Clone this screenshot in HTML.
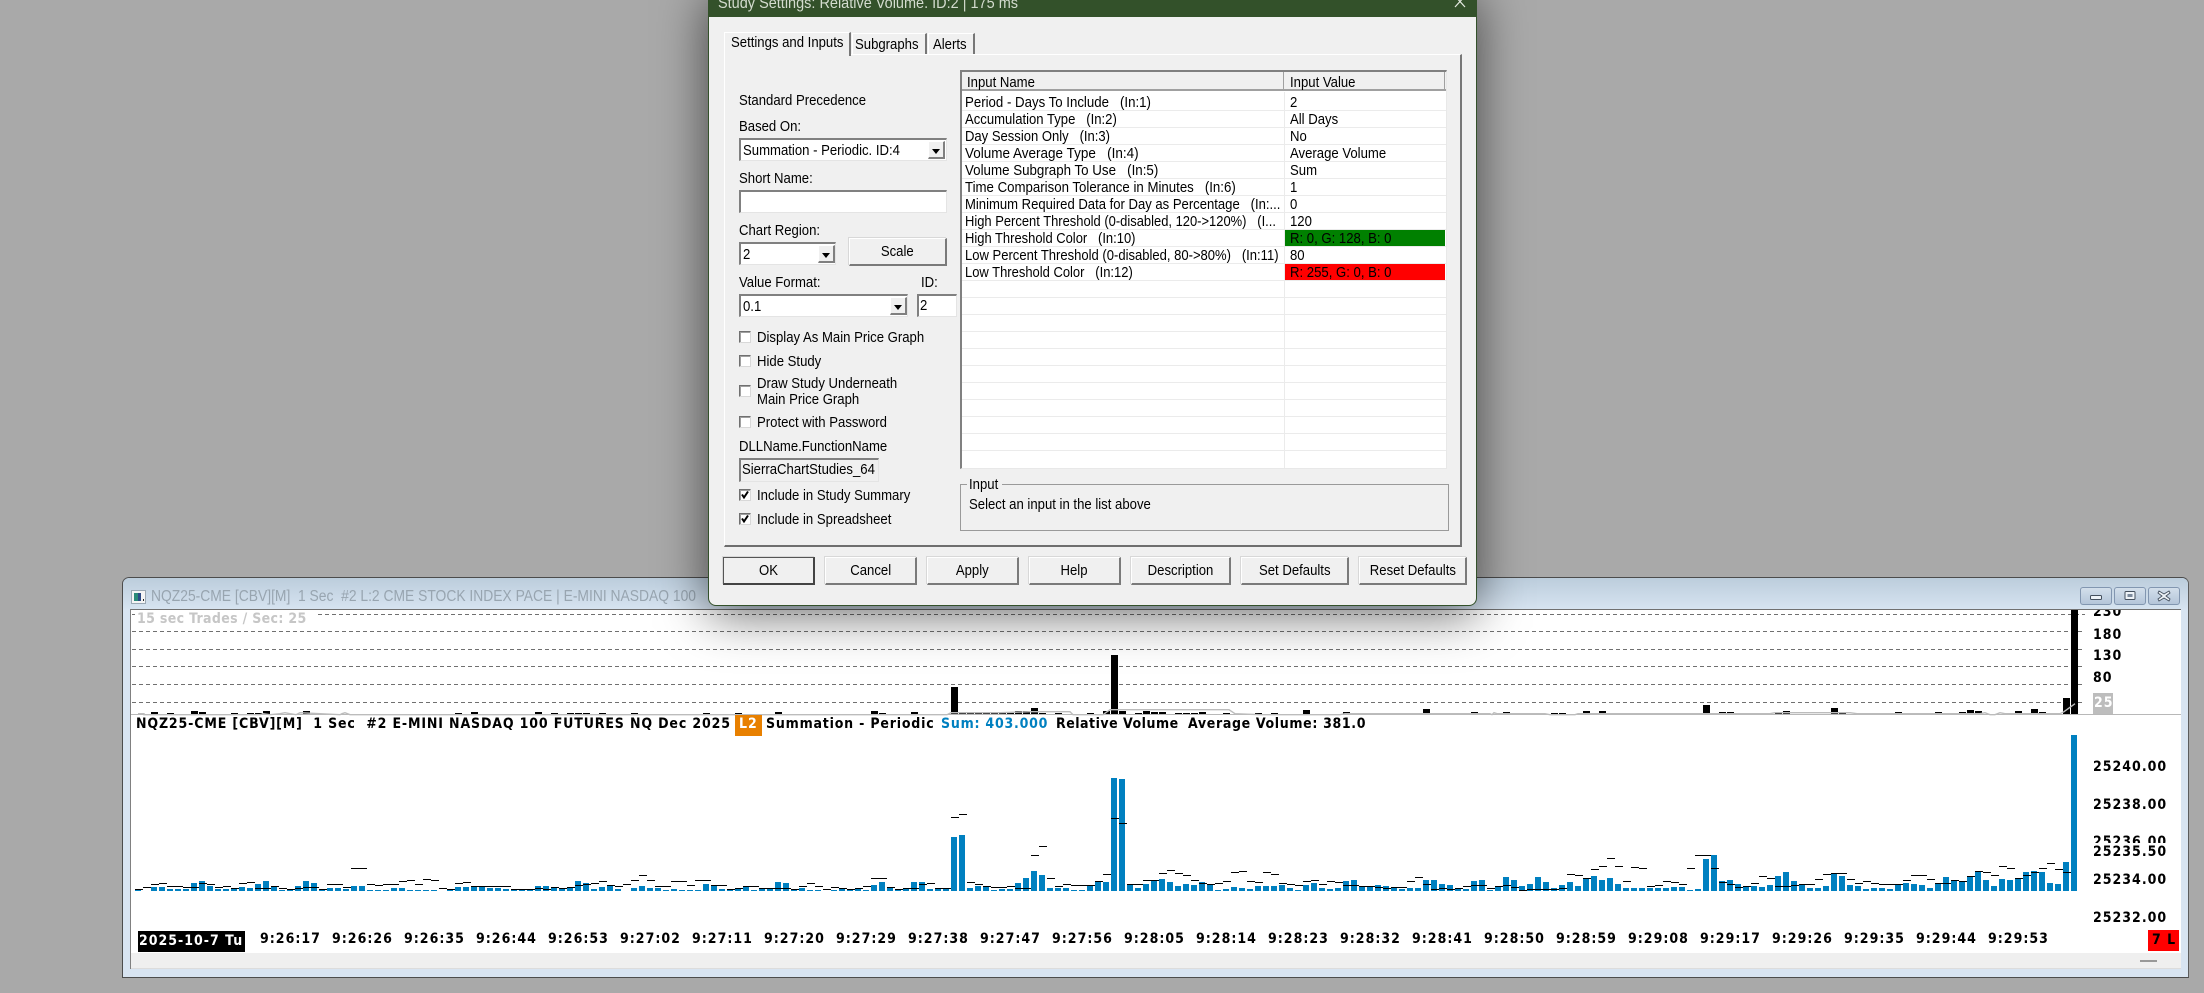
<!DOCTYPE html>
<html><head><meta charset="utf-8"><style>
html,body{margin:0;padding:0;width:2204px;height:993px;overflow:hidden;background:#a9a9a9}
div{box-sizing:border-box}
.a{position:absolute}
.t{position:absolute;white-space:pre;height:20px;margin-top:1px;font:14.6px/20px "Liberation Sans",sans-serif;color:#000;transform:scaleX(.9);transform-origin:0 50%}
.c{position:absolute;white-space:pre;height:20px;font-family:"DejaVu Sans",sans-serif;font-weight:700;font-stretch:condensed;font-size:14px;line-height:20px;letter-spacing:1px;color:#000}
.sk{position:absolute;background:#fff;border-top:2px solid #808080;border-left:2px solid #808080;border-right:1px solid #e4e4e4;border-bottom:1px solid #e4e4e4}
.ar{position:absolute;background:#f0f0f0;border-right:2px solid #808080;border-bottom:2px solid #808080;border-top:1px solid #fff;border-left:1px solid #fff}
.ar:after{content:"";position:absolute;left:3px;top:7px;border-left:4px solid transparent;border-right:4px solid transparent;border-top:5px solid #000}
.b{position:absolute;background:#f0f0f0;border:1px solid #fff;border-right:2px solid #7a7a7a;border-bottom:2px solid #7a7a7a;text-align:center;font:14.6px/26px "Liberation Sans",sans-serif;color:#000;box-shadow:-1px -1px 0 #d8d8d8}
.b span{display:inline-block;transform:scaleX(.9)}
.k{position:absolute;width:12px;height:12px;background:#fff;border-top:1px solid #707070;border-left:1px solid #707070;border-right:1px solid #d8d8d8;border-bottom:1px solid #d8d8d8;box-shadow:inset 1px 1px 0 #a0a0a0}
.wb{position:absolute;top:587px;width:32px;height:18px;border:1px solid #8296b0;border-radius:3px;background:linear-gradient(#d3dfeb,#b4c5d9)}
</style></head><body>

<!-- chart window -->
<div class="a" style="left:122px;top:577px;width:2067px;height:401px;background:#d8e4f1;border:1px solid #4c4c4c;border-right:1px solid #5c5c5c;border-radius:7px 7px 0 0"></div>
<div class="a" style="left:123px;top:578px;width:2065px;height:31px;background:linear-gradient(#bccddc,#d6e3f0);border-radius:6px 6px 0 0"></div>
<div class="a" style="left:130px;top:609px;width:2051px;height:360px;background:#fff;border-top:1px solid #707070;border-left:1px solid #808080"></div>
<div class="a" style="left:131px;top:953px;width:2050px;height:16px;background:#efefef;border-bottom:1px solid #dcdcdc"></div>
<div class="a" style="left:2140px;top:960px;width:17px;height:2px;background:#999"></div>

<svg class="a" style="left:131px;top:590px" width="15" height="14"><rect x=".5" y=".5" width="14" height="13" fill="#f4f4f4" stroke="#9aa8b4"/><rect x="3" y="3" width="4" height="8" fill="#2a8a78"/><rect x="7" y="3" width="3" height="8" fill="#2c4a84"/><rect x="12" y="9" width="1" height="2" fill="#222"/></svg>
<div class="t" style="left:151px;top:587px;margin-top:0;font-size:15.4px;color:#98a5b0">NQZ25-CME [CBV][M]  1 Sec  #2 L:2 CME STOCK INDEX PACE | E-MINI NASDAQ 100</div>

<div class="wb" style="left:2080px"><svg width="30" height="16"><rect x="9.5" y="7.5" width="11" height="4" rx="1" fill="#eef3f8" stroke="#44505e"/></svg></div>
<div class="wb" style="left:2114px"><svg width="30" height="16"><rect x="10" y="3.5" width="10" height="8" rx="1" fill="#eef3f8" stroke="#44505e"/><rect x="12.5" y="6" width="5" height="3" fill="#7b8a9c"/></svg></div>
<div class="wb" style="left:2148px"><svg width="30" height="16"><path d="M10 3l5 3 5-3 1 2-4 3 4 3-1 2-5-3-5 3-1-2 4-3-4-3z" fill="#eef3f8" stroke="#44505e" stroke-width=".9"/></svg></div>

<svg class="a" style="left:0;top:0" width="2204" height="993">
<g stroke="#707070" stroke-width="1" stroke-dasharray="4 3" shape-rendering="crispEdges">
<path d="M318 614.5H2085M132 631.5H2085M132 649.5H2085M132 666.5H2085M132 684.5H2085M132 702.5H2085"/>
</g>
<path d="M132 614.5h3" stroke="#707070"/>
<!-- black bars -->
<path fill="none" stroke="#000" stroke-width="7" shape-rendering="crispEdges" d="M154.500 714v-2M170.500 714v-1M194.500 714v-3M202.500 714v-2M234.500 714v-1M250.500 714v-1M258.500 714v-1M266.500 714v-3M306.500 714v-3M458.500 714v-1M474.500 714v-2M538.500 714v-2M554.500 714v-1M570.500 714v-1M578.500 714v-1M586.500 714v-1M602.500 714v-1M634.500 714v-1M706.500 714v-1M738.500 714v-1M778.500 714v-2M874.500 714v-3M882.500 714v-1M914.500 714v-2M954.500 714v-27M962.500 714v-1M970.500 714v-1M978.500 714v-1M986.500 714v-1M994.500 714v-1M1002.500 714v-1M1010.500 714v-1M1018.500 714v-3M1026.500 714v-3M1034.500 714v-6M1042.500 714v-1M1058.500 714v-1M1090.500 714v-1M1106.500 714v-3M1114.500 714v-59M1122.500 714v-3M1138.500 714v-1M1146.500 714v-3M1154.500 714v-2M1162.500 714v-2M1178.500 714v-1M1186.500 714v-1M1194.500 714v-1M1202.500 714v-2M1226.500 714v-1M1258.500 714v-1M1274.500 714v-1M1306.500 714v-4M1346.500 714v-2M1354.500 714v-1M1426.500 714v-5M1474.500 714v-2M1506.500 714v-2M1554.500 714v-1M1562.500 714v-1M1586.500 714v-3M1594.500 714v-1M1602.500 714v-3M1610.500 714v-1M1706.500 714v-9M1714.500 714v-1M1722.500 714v-2M1730.500 714v-2M1778.500 714v-2M1786.500 714v-3M1834.500 714v-6M1842.500 714v-1M1898.500 714v-2M1914.500 714v-1M1938.500 714v-2M1954.500 714v-1M1962.500 714v-2M1970.500 714v-4M1978.500 714v-3M2018.500 714v-3M2026.500 714v-1M2034.500 714v-5M2042.500 714v-2M2050.500 714v-1M2066.500 714v-16M2074.500 714V610"/>
<!-- baseline + gray avg line -->
<rect x="131" y="714" width="2050" height="1" fill="#b8b8b8"/>
<polyline fill="none" stroke="#bcbcbc" stroke-width="1.4" transform="translate(0 .7)" points="138,713 144,713 144,714 260,714 263,713 270,714 280,713 285,712 290,713 296,714 300,712 320,713 340,714 342,713 345,712 350,714 947,714 951,712 1000,712 1030,711 1070,711 1073,714 1103,714 1110,709 1229,709 1235,713 1260,714 1340,714 1345,713 1490,713 1492,714 1494,712 1497,713 1545,713 1550,714 1575,714 1578,713 1770,713 1775,712 1850,712 1857,713 1980,713 1985,712 1990,714 1995,714 2000,712 2005,713 2060,713 2064,711 2075,703"/>
<!-- blue bars -->
<path fill="none" stroke="#0080c0" stroke-width="6" shape-rendering="crispEdges" d="M138 891v-2m8 2m8 0v-4m8 4v-4m8 4v-2m8 2v-2m8 2v-2m8 2v-8m8 8v-10m8 10v-5m8 5v-2m8 2v-2m8 2v-2m8 2v-4m8 4v-3m8 3v-7m8 7v-10m8 10v-4m8 4v-1m8 1v-1m8 1v-5m8 5v-10m8 10v-8m8 8v-2m8 2v-3m8 3v-3m8 3v-2m8 2v-5m8 5v-5m8 5v-1m8 1v-1m8 1v-1m8 1v-3m8 3v-3m8 3v-1m8 1v-1m8 1v-1m8 1v-1m8 1m8 0v-2m8 2v-4m8 4v-4m8 4v-5m8 5v-5m8 5v-3m8 3v-3m8 3v-2m8 2v-1m8 1v-2m8 2v-1m8 1v-5m8 5v-5m8 5v-4m8 4v-2m8 2v-3m8 3v-10m8 10v-8m8 8v-2m8 2v-4m8 4v-6m8 6v-2m8 2m8 0v-3m8 3v-5m8 5v-3m8 3v-3m8 3v-1m8 1v-2m8 2v-1m8 1v-1m8 1v-1m8 1v-7m8 7v-5m8 5v-2m8 2v-1m8 1v-3m8 3v-4m8 4v-1m8 1v-2m8 2v-2m8 2v-9m8 9v-8m8 8v-2m8 2v-3m8 3v-1m8 1v-1m8 1m8 0v-1m8 1v-3m8 3v-1m8 1v-2m8 2v-1m8 1v-6m8 6v-9m8 9v-4m8 4v-1m8 1v-2m8 2v-9m8 9v-9m8 9v-2m8 2v-3m8 3v-2m8 2v-54m8 54v-56m8 56v-3m8 3v-5m8 5v-4m8 4v-1m8 1v-2m8 2v-2m8 2v-8m8 8v-13m8 13v-20m8 20v-16m8 16v-3m8 3v-3m8 3v-3m8 3v-1m8 1v-1m8 1v-6m8 6v-9m8 9v-9m8 9v-113m8 113v-112m8 112v-6m8 6v-3m8 3v-7m8 7v-10m8 10v-12m8 12v-9m8 9v-5m8 5v-7m8 7v-6m8 6v-9m8 9v-7m8 7v-1m8 1v-2m8 2v-4m8 4v-3m8 3v-2m8 2v-5m8 5v-5m8 5v-5m8 5v-6m8 6v-3m8 3v-1m8 1v-6m8 6v-8m8 8v-3m8 3v-2m8 2v-3m8 3v-10m8 10v-11m8 11v-5m8 5v-5m8 5v-6m8 6v-5m8 5v-4m8 4v-2m8 2v-3m8 3v-3m8 3v-11m8 11v-11m8 11v-7m8 7v-6m8 6v-3m8 3v-2m8 2v-10m8 10v-11m8 11v-1m8 1v-5m8 5v-14m8 14v-11m8 11v-5m8 5v-7m8 7v-14m8 14v-9m8 9v-3m8 3v-6m8 6v-9m8 9v-5m8 5v-12m8 12v-15m8 15v-11m8 11v-13m8 13v-7m8 7v-3m8 3v-3m8 3v-3m8 3v-3m8 3v-3m8 3v-3m8 3v-4m8 4v-4m8 4v-1m8 1v-2m8 2v-32m8 32v-36m8 36v-10m8 10v-11m8 11v-7m8 7v-5m8 5v-5m8 5v-4m8 4v-6m8 6v-15m8 15v-19m8 19v-10m8 10v-6m8 6v-3m8 3v-3m8 3v-5m8 5v-18m8 18v-15m8 15v-6m8 6v-5m8 5v-2m8 2v-3m8 3v-3m8 3v-2m8 2v-7m8 7v-8m8 8v-7m8 7v-6m8 6v-3m8 3v-8m8 8v-14m8 14v-10m8 10v-9m8 9v-14m8 14v-20m8 20v-11m8 11v-5m8 5v-12m8 12v-11m8 11v-13m8 13v-19m8 19v-20m8 20v-19m8 19v-8m8 8v-7m8 7v-29m8 29v-156"/>
<!-- black dashes -->
<path fill="none" stroke="#000" stroke-width="1" shape-rendering="crispEdges" d="M135 889.500h8M143 887.500h8M151 884.500h8M159 883.500h8M167 886.500h8M175 886.500h8M183 887.500h8M191 887.500h8M199 883.500h8M207 884.500h8M215 887.500h8M223 886.500h8M231 888.500h8M239 883.500h8M247 882.500h8M255 888.500h8M263 888.500h8M271 886.500h8M279 888.500h8M287 889.500h8M295 888.500h8M303 887.500h8M311 887.500h8M319 889.500h8M327 884.500h8M335 884.500h8M343 887.500h8M351 868.500h8M359 868.500h8M367 884.500h8M375 885.500h8M383 884.500h8M391 884.500h8M399 881.500h8M407 880.500h8M415 884.500h8M423 879.500h8M431 880.500h8M439 888.500h8M447 889.500h8M455 883.500h8M463 882.500h8M471 886.500h8M479 886.500h8M487 886.500h8M495 886.500h8M503 886.500h8M511 889.500h8M519 889.500h8M527 889.500h8M535 888.500h8M543 889.500h8M551 887.500h8M559 888.500h8M567 887.500h8M575 885.500h8M583 884.500h8M591 883.500h8M599 881.500h8M607 885.500h8M615 886.500h8M623 884.500h8M631 880.500h8M639 875.500h8M647 880.500h8M655 886.500h8M663 886.500h8M671 881.500h8M679 881.500h8M687 885.500h8M695 880.500h8M703 880.500h8M711 885.500h8M719 885.500h8M727 889.500h8M735 888.500h8M743 886.500h8M751 886.500h8M759 888.500h8M767 888.500h8M775 888.500h8M783 888.500h8M791 889.500h8M799 886.500h8M807 883.500h8M815 886.500h8M823 889.500h8M831 887.500h8M839 888.500h8M847 889.500h8M855 888.500h8M863 886.500h8M871 878.500h8M879 878.500h8M887 887.500h8M895 889.500h8M903 888.500h8M911 888.500h8M919 884.500h8M927 883.500h8M935 888.500h8M943 888.500h8M951 817.500h8M959 814.500h8M967 882.500h8M975 884.500h8M983 886.500h8M991 887.500h8M999 887.500h8M1007 886.500h8M1015 888.500h8M1023 888.500h8M1031 855.500h8M1039 846.500h8M1047 878.500h8M1055 886.500h8M1063 884.500h8M1071 885.500h8M1079 885.500h8M1087 885.500h8M1095 881.500h8M1103 874.500h8M1111 818.500h8M1119 823.500h8M1127 884.500h8M1135 884.500h8M1143 880.500h8M1151 880.500h8M1159 873.500h8M1167 870.500h8M1175 873.500h8M1183 875.500h8M1191 880.500h8M1199 883.500h8M1207 884.500h8M1215 883.500h8M1223 881.500h8M1231 872.500h8M1239 871.500h8M1247 881.500h8M1255 882.500h8M1263 872.500h8M1271 874.500h8M1279 883.500h8M1287 884.500h8M1295 885.500h8M1303 881.500h8M1311 880.500h8M1319 884.500h8M1327 881.500h8M1335 882.500h8M1343 885.500h8M1351 885.500h8M1359 886.500h8M1367 886.500h8M1375 887.500h8M1383 888.500h8M1391 887.500h8M1399 887.500h8M1407 881.500h8M1415 877.500h8M1423 884.500h8M1431 889.500h8M1439 888.500h8M1447 889.500h8M1455 888.500h8M1463 886.500h8M1471 885.500h8M1479 885.500h8M1487 888.500h8M1495 886.500h8M1503 885.500h8M1511 887.500h8M1519 890.500h8M1527 889.500h8M1535 889.500h8M1543 889.500h8M1551 889.500h8M1559 888.500h8M1567 874.500h8M1575 875.500h8M1583 878.500h8M1591 869.500h8M1599 866.500h8M1607 858.500h8M1615 866.500h8M1623 881.500h8M1631 867.500h8M1639 868.500h8M1647 886.500h8M1655 885.500h8M1663 881.500h8M1671 882.500h8M1679 884.500h8M1687 868.500h8M1695 855.500h8M1703 855.500h8M1711 868.500h8M1719 882.500h8M1727 884.500h8M1735 887.500h8M1743 886.500h8M1751 883.500h8M1759 876.500h8M1767 878.500h8M1775 886.500h8M1783 886.500h8M1791 885.500h8M1799 884.500h8M1807 884.500h8M1815 879.500h8M1823 874.500h8M1831 873.500h8M1839 873.500h8M1847 879.500h8M1855 883.500h8M1863 881.500h8M1871 883.500h8M1879 884.500h8M1887 884.500h8M1895 884.500h8M1903 880.500h8M1911 875.500h8M1919 875.500h8M1927 879.500h8M1935 883.500h8M1943 883.500h8M1951 880.500h8M1959 881.500h8M1967 876.500h8M1975 871.500h8M1983 872.500h8M1991 875.500h8M1999 866.500h8M2007 868.500h8M2015 878.500h8M2023 875.500h8M2031 872.500h8M2039 868.500h8M2047 863.500h8M2055 869.500h8M2063 872.500h8"/>
</svg>

<!-- chart labels -->
<div class="a" style="left:135px;top:610px;width:183px;height:20px;background:#fff"></div>
<div class="c" style="left:137px;top:609px;color:#c6c6c6;letter-spacing:.33px">15 sec Trades / Sec: 25</div>
<div class="c" style="left:136px;top:714px;letter-spacing:.85px">NQZ25-CME [CBV][M]  1 Sec  #2 E-MINI NASDAQ 100 FUTURES NQ Dec 2025</div>
<div class="a" style="left:735px;top:715px;width:27px;height:21px;background:#e88000"></div>
<div class="c" style="left:739px;top:714px;color:#fff">L2</div>
<div class="c" style="left:766px;top:714px;letter-spacing:.8px">Summation - Periodic</div>
<div class="c" style="left:941px;top:714px;color:#0080c0;letter-spacing:.77px">Sum: 403.000</div>
<div class="c" style="left:1056px;top:714px;letter-spacing:.5px">Relative Volume</div>
<div class="c" style="left:1188px;top:714px;letter-spacing:.65px">Average Volume: 381.0</div>

<div class="a" style="left:2085px;top:610px;width:40px;height:9px;overflow:hidden"><div class="c" style="left:8px;top:-8px">230</div></div>
<div class="c" style="left:2093px;top:625px">180</div>
<div class="c" style="left:2093px;top:646px">130</div>
<div class="c" style="left:2093px;top:668px">80</div>
<div class="a" style="left:2093px;top:693px;width:20px;height:21px;background:#bdbdbd"></div>
<div class="c" style="left:2094px;top:693px;color:#fff">25</div>

<div class="c" style="left:2093px;top:757px">25240.00</div>
<div class="c" style="left:2093px;top:795px">25238.00</div>
<div class="a" style="left:2085px;top:835px;width:90px;height:8px;overflow:hidden"><div class="c" style="left:8px;top:-3px">25236.00</div></div>
<div class="c" style="left:2093px;top:842px">25235.50</div>
<div class="c" style="left:2093px;top:870px">25234.00</div>
<div class="c" style="left:2093px;top:908px">25232.00</div>

<div class="a" style="left:138px;top:931px;width:107px;height:21px;background:#000"></div>
<div class="c" style="left:139px;top:931px;color:#fff">2025-10-7 Tu</div>
<div class="c" style="left:260px;top:929px">9:26:17</div>
<div class="c" style="left:332px;top:929px">9:26:26</div>
<div class="c" style="left:404px;top:929px">9:26:35</div>
<div class="c" style="left:476px;top:929px">9:26:44</div>
<div class="c" style="left:548px;top:929px">9:26:53</div>
<div class="c" style="left:620px;top:929px">9:27:02</div>
<div class="c" style="left:692px;top:929px">9:27:11</div>
<div class="c" style="left:764px;top:929px">9:27:20</div>
<div class="c" style="left:836px;top:929px">9:27:29</div>
<div class="c" style="left:908px;top:929px">9:27:38</div>
<div class="c" style="left:980px;top:929px">9:27:47</div>
<div class="c" style="left:1052px;top:929px">9:27:56</div>
<div class="c" style="left:1124px;top:929px">9:28:05</div>
<div class="c" style="left:1196px;top:929px">9:28:14</div>
<div class="c" style="left:1268px;top:929px">9:28:23</div>
<div class="c" style="left:1340px;top:929px">9:28:32</div>
<div class="c" style="left:1412px;top:929px">9:28:41</div>
<div class="c" style="left:1484px;top:929px">9:28:50</div>
<div class="c" style="left:1556px;top:929px">9:28:59</div>
<div class="c" style="left:1628px;top:929px">9:29:08</div>
<div class="c" style="left:1700px;top:929px">9:29:17</div>
<div class="c" style="left:1772px;top:929px">9:29:26</div>
<div class="c" style="left:1844px;top:929px">9:29:35</div>
<div class="c" style="left:1916px;top:929px">9:29:44</div>
<div class="c" style="left:1988px;top:929px">9:29:53</div>
<div class="a" style="left:2148px;top:930px;width:31px;height:21px;background:#f00"></div>
<div class="c" style="left:2152px;top:930px">7 L</div>

<!-- dialog -->
<div class="a" style="left:708px;top:-10px;width:769px;height:616px;background:#f0f0f0;border:1px solid #33512a;border-radius:0 0 8px 8px;box-shadow:0 8px 50px rgba(0,0,0,.6)"></div>
<div class="a" style="left:708px;top:-10px;width:769px;height:27px;background:#33512a"></div>
<div class="t" style="left:718px;top:-8px;font-size:16.1px;color:#d4dccf">Study Settings: Relative Volume. ID:2 | 175 ms</div>
<svg class="a" style="left:1454px;top:0" width="13" height="8"><path d="M1 -4L11 7M11 -4L1 7" stroke="#e6ebe2" stroke-width="1.2" fill="none"/></svg>

<!-- tab page -->
<div class="a" style="left:724px;top:54px;width:738px;height:493px;background:#f0f0f0;border-top:1px solid #fff;border-left:1px solid #fff;border-right:2px solid #777;border-bottom:2px solid #6e6e6e"></div>
<div class="a" style="left:724px;top:32px;width:127px;height:24px;background:#f0f0f0;border-top:1px solid #fff;border-left:1px solid #fff;border-right:2px solid #777"></div>
<div class="a" style="left:852px;top:33px;width:75px;height:21px;background:#f0f0f0;border-top:1px solid #fff;border-left:1px solid #fff;border-right:2px solid #777"></div>
<div class="a" style="left:928px;top:33px;width:47px;height:21px;background:#f0f0f0;border-top:1px solid #fff;border-left:1px solid #fff;border-right:2px solid #777"></div>
<div class="t" style="left:731px;top:32px">Settings and Inputs</div>
<div class="t" style="left:855px;top:34px">Subgraphs</div>
<div class="t" style="left:933px;top:34px">Alerts</div>

<!-- left col -->
<div class="t" style="left:739px;top:90px">Standard Precedence</div>
<div class="t" style="left:739px;top:116px">Based On:</div>
<div class="sk" style="left:739px;top:138px;width:208px;height:23px"></div>
<div class="ar" style="left:928px;top:141px;width:17px;height:18px"></div>
<div class="t" style="left:743px;top:140px">Summation - Periodic. ID:4</div>
<div class="t" style="left:739px;top:168px">Short Name:</div>
<div class="sk" style="left:739px;top:190px;width:208px;height:23px"></div>
<div class="t" style="left:739px;top:220px">Chart Region:</div>
<div class="sk" style="left:739px;top:242px;width:97px;height:23px"></div>
<div class="ar" style="left:818px;top:245px;width:17px;height:18px"></div>
<div class="t" style="left:743px;top:244px">2</div>
<div class="b" style="left:849px;top:238px;width:98px;height:28px"><span>Scale</span></div>
<div class="t" style="left:739px;top:272px">Value Format:</div>
<div class="t" style="left:921px;top:272px">ID:</div>
<div class="sk" style="left:739px;top:294px;width:169px;height:23px"></div>
<div class="ar" style="left:890px;top:297px;width:17px;height:18px"></div>
<div class="t" style="left:743px;top:296px">0.1</div>
<div class="sk" style="left:917px;top:294px;width:40px;height:23px"></div>
<div class="t" style="left:920px;top:295px">2</div>

<div class="k" style="left:739px;top:331px"></div><div class="t" style="left:757px;top:327px">Display As Main Price Graph</div>
<div class="k" style="left:739px;top:355px"></div><div class="t" style="left:757px;top:351px">Hide Study</div>
<div class="k" style="left:739px;top:385px"></div><div class="t" style="left:757px;top:373px">Draw Study Underneath</div><div class="t" style="left:757px;top:389px">Main Price Graph</div>
<div class="k" style="left:739px;top:416px"></div><div class="t" style="left:757px;top:412px">Protect with Password</div>
<div class="t" style="left:739px;top:436px">DLLName.FunctionName</div>
<div class="sk" style="left:739px;top:458px;width:140px;height:24px;background:#f0f0f0"></div>
<div class="t" style="left:742px;top:459px">SierraChartStudies_64</div>
<div class="k" style="left:739px;top:489px"></div><svg class="a" style="left:739px;top:489px" width="12" height="12"><path d="M3 5.500l2 3 4-6" fill="none" stroke="#000" stroke-width="2"/></svg><div class="t" style="left:757px;top:485px">Include in Study Summary</div>
<div class="k" style="left:739px;top:513px"></div><svg class="a" style="left:739px;top:513px" width="12" height="12"><path d="M3 5.500l2 3 4-6" fill="none" stroke="#000" stroke-width="2"/></svg><div class="t" style="left:757px;top:509px">Include in Spreadsheet</div>

<!-- grid -->
<div class="a" style="left:960px;top:70px;width:487px;height:399px;background:#fff;border-top:2px solid #808080;border-left:2px solid #808080;border-right:1px solid #e8e8e8;border-bottom:1px solid #e8e8e8"></div>
<div class="a" style="left:962px;top:72px;width:484px;height:19px;background:#f0f0f0;border-bottom:2px solid #a0a0a0"></div>
<div class="a" style="left:1283px;top:72px;width:1px;height:19px;background:#a0a0a0"></div>
<div class="a" style="left:1444px;top:72px;width:1px;height:19px;background:#a0a0a0"></div>
<div class="a" style="left:962px;top:94px;width:484px;height:357px;background:repeating-linear-gradient(to bottom,#fff 0 16px,#ebebeb 16px 17px)"></div>
<div class="a" style="left:1284px;top:92px;width:1px;height:376px;background:#ebebeb"></div>
<div class="a" style="left:1285px;top:230px;width:160px;height:16px;background:#008000"></div>
<div class="a" style="left:1285px;top:264px;width:160px;height:16px;background:#f00"></div>
<div class="t" style="left:967px;top:72px">Input Name</div>
<div class="t" style="left:1290px;top:72px">Input Value</div>
<div class="t" style="left:965px;top:92px;transform:scaleX(.907)">Period - Days To Include   (In:1)</div><div class="t" style="left:1290px;top:92px">2</div>
<div class="t" style="left:965px;top:109px;transform:scaleX(.897)">Accumulation Type   (In:2)</div><div class="t" style="left:1290px;top:109px">All Days</div>
<div class="t" style="left:965px;top:126px;transform:scaleX(.894)">Day Session Only   (In:3)</div><div class="t" style="left:1290px;top:126px">No</div>
<div class="t" style="left:965px;top:143px;transform:scaleX(.925)">Volume Average Type   (In:4)</div><div class="t" style="left:1290px;top:143px">Average Volume</div>
<div class="t" style="left:965px;top:160px;transform:scaleX(.914)">Volume Subgraph To Use   (In:5)</div><div class="t" style="left:1290px;top:160px">Sum</div>
<div class="t" style="left:965px;top:177px;transform:scaleX(.907)">Time Comparison Tolerance in Minutes   (In:6)</div><div class="t" style="left:1290px;top:177px">1</div>
<div class="t" style="left:965px;top:194px;transform:scaleX(.896)">Minimum Required Data for Day as Percentage   (In:...</div><div class="t" style="left:1290px;top:194px">0</div>
<div class="t" style="left:965px;top:211px;transform:scaleX(.887)">High Percent Threshold (0-disabled, 120-&gt;120%)   (I...</div><div class="t" style="left:1290px;top:211px">120</div>
<div class="t" style="left:965px;top:228px;transform:scaleX(.888)">High Threshold Color   (In:10)</div><div class="t" style="left:1290px;top:228px">R: 0, G: 128, B: 0</div>
<div class="t" style="left:965px;top:245px;transform:scaleX(.893)">Low Percent Threshold (0-disabled, 80-&gt;80%)   (In:11)</div><div class="t" style="left:1290px;top:245px">80</div>
<div class="t" style="left:965px;top:262px;transform:scaleX(.889)">Low Threshold Color   (In:12)</div><div class="t" style="left:1290px;top:262px">R: 255, G: 0, B: 0</div>

<!-- group box -->
<div class="a" style="left:960px;top:484px;width:489px;height:47px;border:1px solid #9a9a9a"></div>
<div class="a" style="left:967px;top:478px;width:35px;height:12px;background:#f0f0f0"></div>
<div class="t" style="left:969px;top:474px">Input</div>
<div class="t" style="left:969px;top:494px">Select an input in the list above</div>

<!-- buttons -->
<div class="b" style="left:723px;top:557px;width:92px;height:28px;border:1px solid #555;border-bottom:2px solid #444;border-right:2px solid #444"><span>OK</span></div>
<div class="b" style="left:825px;top:557px;width:92px;height:28px"><span>Cancel</span></div>
<div class="b" style="left:927px;top:557px;width:92px;height:28px"><span>Apply</span></div>
<div class="b" style="left:1029px;top:557px;width:92px;height:28px"><span>Help</span></div>
<div class="b" style="left:1131px;top:557px;width:100px;height:28px"><span>Description</span></div>
<div class="b" style="left:1241px;top:557px;width:108px;height:28px"><span>Set Defaults</span></div>
<div class="b" style="left:1359px;top:557px;width:108px;height:28px"><span>Reset Defaults</span></div>
</body></html>
